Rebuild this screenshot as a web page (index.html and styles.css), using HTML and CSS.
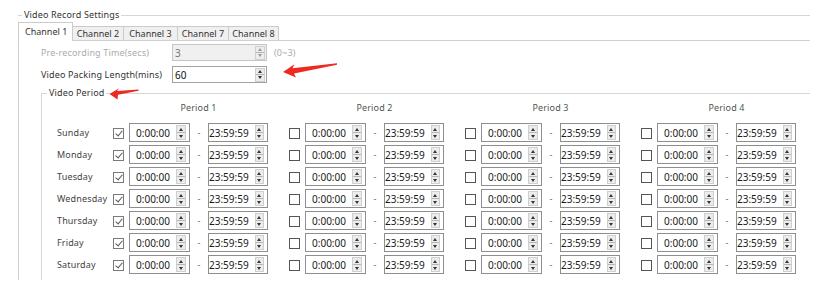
FILE: index.html
```html
<!DOCTYPE html>
<html>
<head>
<meta charset="utf-8">
<link rel="stylesheet" href="styles.css">
</head>
<body>
<div class="group">
  <span class="group-title">Video Record Settings</span>
  <div class="tabs">
    <div class="tab active w1">Channel 1</div>
    <div class="tab w2">Channel 2</div>
    <div class="tab w3">Channel 3</div>
    <div class="tab w2">Channel 7</div>
    <div class="tab w4">Channel 8</div>
  </div>
  <div class="pane">
    <div class="form-row disabled">
      <span class="form-label">Pre-recording Time(secs)</span>
      <div class="num"><span class="num-val">3</span><span class="spin"><i class="up"></i><i class="dn"></i></span></div>
      <span class="hint">(0~3)</span>
    </div>
    <div class="form-row second">
      <span class="form-label">Video Packing Length(mins)</span>
      <div class="num"><span class="num-val">60</span><span class="spin"><i class="up"></i><i class="dn"></i></span></div>
    </div>

    <div class="vp">
      <span class="vp-title">Video Period</span>
      <div class="table">
        <div></div>
        <div class="ph">Period 1</div>
        <div class="ph">Period 2</div>
        <div class="ph">Period 3</div>
        <div class="ph">Period 4</div>

        <div class="day">Sunday</div>
        <div class="period"><span class="cb on"></span><div class="time start"><span class="val">0:00:00</span><span class="spin"><i class="up"></i><i class="dn"></i></span></div><span class="dash">-</span><div class="time end"><span class="val">23:59:59</span><span class="spin"><i class="up"></i><i class="dn"></i></span></div></div>
        <div class="period"><span class="cb"></span><div class="time start"><span class="val">0:00:00</span><span class="spin"><i class="up"></i><i class="dn"></i></span></div><span class="dash">-</span><div class="time end"><span class="val">23:59:59</span><span class="spin"><i class="up"></i><i class="dn"></i></span></div></div>
        <div class="period"><span class="cb"></span><div class="time start"><span class="val">0:00:00</span><span class="spin"><i class="up"></i><i class="dn"></i></span></div><span class="dash">-</span><div class="time end"><span class="val">23:59:59</span><span class="spin"><i class="up"></i><i class="dn"></i></span></div></div>
        <div class="period"><span class="cb"></span><div class="time start"><span class="val">0:00:00</span><span class="spin"><i class="up"></i><i class="dn"></i></span></div><span class="dash">-</span><div class="time end"><span class="val">23:59:59</span><span class="spin"><i class="up"></i><i class="dn"></i></span></div></div>

        <div class="day">Monday</div>
        <div class="period"><span class="cb on"></span><div class="time start"><span class="val">0:00:00</span><span class="spin"><i class="up"></i><i class="dn"></i></span></div><span class="dash">-</span><div class="time end"><span class="val">23:59:59</span><span class="spin"><i class="up"></i><i class="dn"></i></span></div></div>
        <div class="period"><span class="cb"></span><div class="time start"><span class="val">0:00:00</span><span class="spin"><i class="up"></i><i class="dn"></i></span></div><span class="dash">-</span><div class="time end"><span class="val">23:59:59</span><span class="spin"><i class="up"></i><i class="dn"></i></span></div></div>
        <div class="period"><span class="cb"></span><div class="time start"><span class="val">0:00:00</span><span class="spin"><i class="up"></i><i class="dn"></i></span></div><span class="dash">-</span><div class="time end"><span class="val">23:59:59</span><span class="spin"><i class="up"></i><i class="dn"></i></span></div></div>
        <div class="period"><span class="cb"></span><div class="time start"><span class="val">0:00:00</span><span class="spin"><i class="up"></i><i class="dn"></i></span></div><span class="dash">-</span><div class="time end"><span class="val">23:59:59</span><span class="spin"><i class="up"></i><i class="dn"></i></span></div></div>

        <div class="day">Tuesday</div>
        <div class="period"><span class="cb on"></span><div class="time start"><span class="val">0:00:00</span><span class="spin"><i class="up"></i><i class="dn"></i></span></div><span class="dash">-</span><div class="time end"><span class="val">23:59:59</span><span class="spin"><i class="up"></i><i class="dn"></i></span></div></div>
        <div class="period"><span class="cb"></span><div class="time start"><span class="val">0:00:00</span><span class="spin"><i class="up"></i><i class="dn"></i></span></div><span class="dash">-</span><div class="time end"><span class="val">23:59:59</span><span class="spin"><i class="up"></i><i class="dn"></i></span></div></div>
        <div class="period"><span class="cb"></span><div class="time start"><span class="val">0:00:00</span><span class="spin"><i class="up"></i><i class="dn"></i></span></div><span class="dash">-</span><div class="time end"><span class="val">23:59:59</span><span class="spin"><i class="up"></i><i class="dn"></i></span></div></div>
        <div class="period"><span class="cb"></span><div class="time start"><span class="val">0:00:00</span><span class="spin"><i class="up"></i><i class="dn"></i></span></div><span class="dash">-</span><div class="time end"><span class="val">23:59:59</span><span class="spin"><i class="up"></i><i class="dn"></i></span></div></div>

        <div class="day">Wednesday</div>
        <div class="period"><span class="cb on"></span><div class="time start"><span class="val">0:00:00</span><span class="spin"><i class="up"></i><i class="dn"></i></span></div><span class="dash">-</span><div class="time end"><span class="val">23:59:59</span><span class="spin"><i class="up"></i><i class="dn"></i></span></div></div>
        <div class="period"><span class="cb"></span><div class="time start"><span class="val">0:00:00</span><span class="spin"><i class="up"></i><i class="dn"></i></span></div><span class="dash">-</span><div class="time end"><span class="val">23:59:59</span><span class="spin"><i class="up"></i><i class="dn"></i></span></div></div>
        <div class="period"><span class="cb"></span><div class="time start"><span class="val">0:00:00</span><span class="spin"><i class="up"></i><i class="dn"></i></span></div><span class="dash">-</span><div class="time end"><span class="val">23:59:59</span><span class="spin"><i class="up"></i><i class="dn"></i></span></div></div>
        <div class="period"><span class="cb"></span><div class="time start"><span class="val">0:00:00</span><span class="spin"><i class="up"></i><i class="dn"></i></span></div><span class="dash">-</span><div class="time end"><span class="val">23:59:59</span><span class="spin"><i class="up"></i><i class="dn"></i></span></div></div>

        <div class="day">Thursday</div>
        <div class="period"><span class="cb on"></span><div class="time start"><span class="val">0:00:00</span><span class="spin"><i class="up"></i><i class="dn"></i></span></div><span class="dash">-</span><div class="time end"><span class="val">23:59:59</span><span class="spin"><i class="up"></i><i class="dn"></i></span></div></div>
        <div class="period"><span class="cb"></span><div class="time start"><span class="val">0:00:00</span><span class="spin"><i class="up"></i><i class="dn"></i></span></div><span class="dash">-</span><div class="time end"><span class="val">23:59:59</span><span class="spin"><i class="up"></i><i class="dn"></i></span></div></div>
        <div class="period"><span class="cb"></span><div class="time start"><span class="val">0:00:00</span><span class="spin"><i class="up"></i><i class="dn"></i></span></div><span class="dash">-</span><div class="time end"><span class="val">23:59:59</span><span class="spin"><i class="up"></i><i class="dn"></i></span></div></div>
        <div class="period"><span class="cb"></span><div class="time start"><span class="val">0:00:00</span><span class="spin"><i class="up"></i><i class="dn"></i></span></div><span class="dash">-</span><div class="time end"><span class="val">23:59:59</span><span class="spin"><i class="up"></i><i class="dn"></i></span></div></div>

        <div class="day">Friday</div>
        <div class="period"><span class="cb on"></span><div class="time start"><span class="val">0:00:00</span><span class="spin"><i class="up"></i><i class="dn"></i></span></div><span class="dash">-</span><div class="time end"><span class="val">23:59:59</span><span class="spin"><i class="up"></i><i class="dn"></i></span></div></div>
        <div class="period"><span class="cb"></span><div class="time start"><span class="val">0:00:00</span><span class="spin"><i class="up"></i><i class="dn"></i></span></div><span class="dash">-</span><div class="time end"><span class="val">23:59:59</span><span class="spin"><i class="up"></i><i class="dn"></i></span></div></div>
        <div class="period"><span class="cb"></span><div class="time start"><span class="val">0:00:00</span><span class="spin"><i class="up"></i><i class="dn"></i></span></div><span class="dash">-</span><div class="time end"><span class="val">23:59:59</span><span class="spin"><i class="up"></i><i class="dn"></i></span></div></div>
        <div class="period"><span class="cb"></span><div class="time start"><span class="val">0:00:00</span><span class="spin"><i class="up"></i><i class="dn"></i></span></div><span class="dash">-</span><div class="time end"><span class="val">23:59:59</span><span class="spin"><i class="up"></i><i class="dn"></i></span></div></div>

        <div class="day">Saturday</div>
        <div class="period"><span class="cb on"></span><div class="time start"><span class="val">0:00:00</span><span class="spin"><i class="up"></i><i class="dn"></i></span></div><span class="dash">-</span><div class="time end"><span class="val">23:59:59</span><span class="spin"><i class="up"></i><i class="dn"></i></span></div></div>
        <div class="period"><span class="cb"></span><div class="time start"><span class="val">0:00:00</span><span class="spin"><i class="up"></i><i class="dn"></i></span></div><span class="dash">-</span><div class="time end"><span class="val">23:59:59</span><span class="spin"><i class="up"></i><i class="dn"></i></span></div></div>
        <div class="period"><span class="cb"></span><div class="time start"><span class="val">0:00:00</span><span class="spin"><i class="up"></i><i class="dn"></i></span></div><span class="dash">-</span><div class="time end"><span class="val">23:59:59</span><span class="spin"><i class="up"></i><i class="dn"></i></span></div></div>
        <div class="period"><span class="cb"></span><div class="time start"><span class="val">0:00:00</span><span class="spin"><i class="up"></i><i class="dn"></i></span></div><span class="dash">-</span><div class="time end"><span class="val">23:59:59</span><span class="spin"><i class="up"></i><i class="dn"></i></span></div></div>
      </div>
    </div>
  </div>
</div>

<svg class="annot" width="820" height="288" viewBox="0 0 820 288">
  <polygon points="283,72 294.5,64.3 292.5,68.2 337,63.3 337,64.8 294,73.6 296,77.6" fill="#ec2a20"/>
  <polygon points="109.5,94 119,88.2 117,91 138.5,89.4 138.5,90.7 118,94.8 117.5,99.6" fill="#ec2a20"/>
</svg>
</body>
</html>
```
FILE: styles.css
```css
* { box-sizing: border-box; }

html, body {
  margin: 0;
  padding: 0;
  background: #fff;
}

body {
  position: relative;
  width: 820px;
  height: 288px;
  overflow: hidden;
  font-family: "Noto Sans", "Open Sans", sans-serif;
  font-size: 9px;
  line-height: 12px;
  letter-spacing: 0.15px;
  color: #3a3a3a;
}

.group {
  position: relative;
  margin: 15px 10px 0 18px;
  border-top: 1px solid #d6d6d6;
}

.group-title {
  position: absolute;
  top: -7px;
  left: 4px;
  padding: 0 2px;
  background: #fff;
  color: #333;
}

.tabs {
  display: flex;
  align-items: flex-end;
  margin-top: 6px;
  height: 18px;
}

.tab {
  height: 14px;
  border: 1px solid #cbcbcb;
  border-bottom: none;
  background: #f0f0f0;
  color: #333;
  text-align: center;
  line-height: 13px;
  margin-left: -1px;
  letter-spacing: 0;
}

.tab.active {
  position: relative;
  z-index: 1;
  height: 19px;
  margin-left: 0;
  margin-bottom: -1px;
  background: #fff;
  text-align: left;
  padding-left: 6px;
  line-height: 17px;
}

.w1 { width: 55px; }
.w2 { width: 52px; }
.w3 { width: 55px; }
.w4 { width: 51px; }

.pane {
  height: 240px;
  border-top: 1px solid #d0d0d0;
  border-left: 1px solid #d0d0d0;
  padding: 3px 0 0 22px;
}

.form-row {
  display: flex;
  align-items: center;
  height: 17px;
}

.form-row.second {
  margin-top: 5px;
  color: #333;
}

.form-label {
  width: 131px;
}

.disabled .form-label,
.disabled .hint {
  color: #ababab;
}

.hint {
  margin-left: 7px;
}

.num {
  display: flex;
  align-items: center;
  width: 95px;
  height: 17px;
  border: 1px solid #a2a2a2;
  background: #fff;
  font-size: 10px;
  color: #111;
  letter-spacing: 0;
}

.disabled .num {
  background: #f0f0f0;
  border-color: #c6c6c6;
  color: #777;
}

.num-val {
  flex: 1;
  padding-left: 2px;
}

.num .spin {
  margin-right: 1px;
  height: 14px;
}

.spin {
  display: flex;
  flex-direction: column;
  width: 10px;
  height: 15px;
  border: 1px solid #cfcfcf;
  background: #ececec;
}

.spin i {
  flex: 1;
  display: flex;
  align-items: center;
  justify-content: center;
}

.spin .dn {
  border-top: 1px solid #b5b5b5;
}

.spin .up::before {
  content: "";
  border-left: 2px solid transparent;
  border-right: 2px solid transparent;
  border-bottom: 3px solid #333;
}

.spin .dn::before {
  content: "";
  border-left: 2px solid transparent;
  border-right: 2px solid transparent;
  border-top: 3px solid #333;
}

.disabled .spin .up::before { border-bottom-color: #9a9a9a; }
.disabled .spin .dn::before { border-top-color: #9a9a9a; }

.vp {
  position: relative;
  height: 187px;
  margin-top: 10px;
  border-top: 1px solid #d6d6d6;
  border-left: 1px solid #d6d6d6;
  padding: 8px 0 0 15px;
}

.vp-title {
  position: absolute;
  top: -7px;
  left: 5px;
  padding: 0 2px;
  background: #fff;
  color: #333;
}

.table {
  display: grid;
  grid-template-columns: 56px repeat(4, 176px);
  grid-template-rows: 18px repeat(7, 19px);
  row-gap: 3px;
}

.ph {
  padding-left: 16px;
  width: 155px;
  text-align: center;
  color: #555;
}

.day {
  align-self: center;
  color: #444;
  padding-top: 1px;
}

.period {
  display: flex;
  align-items: center;
  height: 19px;
}

.cb {
  position: relative;
  width: 11px;
  height: 11px;
  margin-top: 2px;
  margin-right: 5px;
  border: 1px solid #555;
  background: #fff;
}

.cb.on {
  border-color: #7a7a7a;
}

.cb.on::after {
  content: "";
  position: absolute;
  left: 3px;
  top: 0px;
  width: 3px;
  height: 6px;
  border: solid #555;
  border-width: 0 1px 1px 0;
  transform: rotate(40deg);
}

.time {
  display: flex;
  align-items: center;
  height: 19px;
  border: 1px solid #8e8e8e;
  background: #fff;
  font-size: 10px;
  color: #1a1a1a;
  letter-spacing: 0;
}

.time.start { width: 61px; }
.time.end { width: 60px; }

.val {
  flex: 1;
  text-align: right;
  padding-right: 6px;
}

.time .spin {
  margin-right: 3px;
}

.dash {
  width: 18px;
  text-align: center;
  color: #666;
}

.annot {
  position: absolute;
  left: 0;
  top: 0;
  pointer-events: none;
}
```
